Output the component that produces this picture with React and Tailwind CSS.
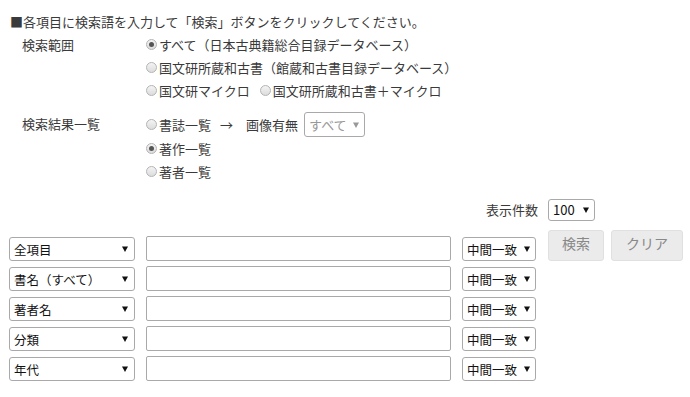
import React from 'react';

const font = { fontFamily: '"Noto Sans CJK JP", "Noto Sans", sans-serif' };

function Radio({ checked, label }) {
    return (
        <label className="flex items-center h-[23px] whitespace-nowrap">
            <span className="w-[11px] h-[11px] mr-[2px] rounded-full border border-[#b4b4b4] bg-gradient-to-b from-[#f4f4f4] to-[#dcdcdc] flex items-center justify-center">
                {checked && <span className="w-[5px] h-[5px] rounded-full bg-[#555]"></span>}
            </span>
            <span>{label}</span>
        </label>
    );
}

function Arrow({ muted }) {
    return (
        <svg width="6" height="6" viewBox="0 0 6 6" className="shrink-0">
            <path d="M0 0.5 L6 0.5 L3 6 Z" fill={muted ? '#999' : '#111'} />
        </svg>
    );
}

function Select({ label, className, muted }) {
    return (
        <div className={`flex items-center justify-between border border-[#a9a9a9] rounded-[3px] bg-white pl-[4px] pr-[5px] text-[12.5px] ${className}`}>
            <span className={muted ? 'text-[#999]' : 'text-[#111]'}>{label}</span>
            <Arrow muted={muted} />
        </div>
    );
}

function SearchRow({ field, children }) {
    return (
        <div className="flex items-end">
            <Select label={field} className="w-[126px] h-[24px] pr-[6px]" />
            <div className="w-[305px] h-[25px] ml-[11px] border border-[#a9a9a9] rounded-[2px] bg-white"></div>
            <Select label="中間一致" className="w-[74px] h-[24px] ml-[11px]" />
            {children}
        </div>
    );
}

export default function App() {
    return (
        <div style={font} className="w-[690px] h-[397px] bg-white text-[#3a3a3a] text-[13px] leading-[23px] pl-[10px] pt-[10px]">
            <p className="whitespace-nowrap">■各項目に検索語を入力して「検索」ボタンをクリックしてください。</p>

            {/* 検索範囲 */}
            <div className="flex">
                <div className="w-[136px] pl-[12px]">検索範囲</div>
                <div className="flex flex-col">
                    <Radio checked label="すべて（日本古典籍総合目録データベース）" />
                    <Radio label="国文研所蔵和古書（館蔵和古書目録データベース）" />
                    <div className="flex gap-[10px]">
                        <Radio label="国文研マイクロ" />
                        <Radio label="国文研所蔵和古書＋マイクロ" />
                    </div>
                </div>
            </div>

            {/* 検索結果一覧 */}
            <div className="flex mt-[10px]">
                <div className="w-[136px] pl-[12px]">検索結果一覧</div>
                <div className="flex flex-col">
                    <div className="flex items-center h-[25px]">
                        <Radio label="書誌一覧" />
                        <span className="ml-[9px]">→</span>
                        <span className="ml-[13px]">画像有無</span>
                        <Select muted label="すべて" className="w-[61px] h-[25px] ml-[6px] rounded-[1px] text-[13px]" />
                    </div>
                    <Radio checked label="著作一覧" />
                    <Radio label="著者一覧" />
                </div>
            </div>

            {/* 表示件数 */}
            <div className="flex items-center justify-end w-[585px] mt-[15px]">
                <span className="mr-[10px]">表示件数</span>
                <Select label="100" className="w-[47px] h-[22px] text-[13px]" />
            </div>

            <div className="flex flex-col gap-[5px] mt-[9px] -ml-[1px]">
                <SearchRow field="全項目">
                    <div className="flex ml-[12px] gap-[7px] text-[14px] text-[#888]">
                        <div className="w-[56px] h-[31px] flex items-center justify-center bg-[#ebebeb] border border-[#e0e0e0] rounded-[3px] pb-[4px]">検索</div>
                        <div className="w-[72px] h-[31px] flex items-center justify-center bg-[#ebebeb] border border-[#e0e0e0] rounded-[3px] pb-[4px]">クリア</div>
                    </div>
                </SearchRow>
                <SearchRow field="書名（すべて）" />
                <SearchRow field="著者名" />
                <SearchRow field="分類" />
                <SearchRow field="年代" />
            </div>
        </div>
    );
}
